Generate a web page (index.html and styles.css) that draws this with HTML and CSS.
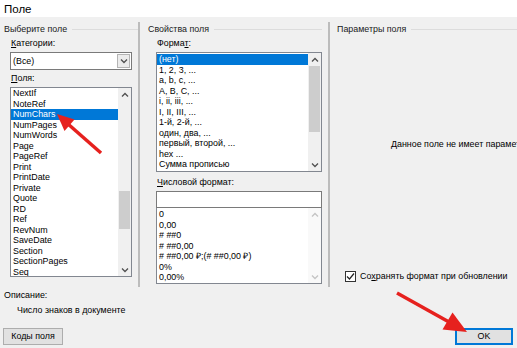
FILE: index.html
```html
<!doctype html>
<html>

<head>
    <meta charset="utf-8">
    <link rel="stylesheet" href="styles.css">
</head>

<body>
    <div class="titlebar">Поле</div>

    <div class="main">
        <div class="col col-left">
            <div class="group">Выберите поле</div>
            <div class="pane">
                <div class="label"><u>К</u>атегории:</div>
                <div class="combo">
                    <span class="combo-text">(Все)</span>
                    <span class="combo-btn"><svg width="8" height="6" viewBox="0 0 8 6"><polyline points="1,1.5 4,4.5 7,1.5" /></svg></span>
                </div>
                <div class="label"><u>П</u>оля:</div>
                <div class="list fields">
                    <div class="items">
                        <div class="item">NextIf</div>
                        <div class="item">NoteRef</div>
                        <div class="item sel">NumChars</div>
                        <div class="item">NumPages</div>
                        <div class="item">NumWords</div>
                        <div class="item">Page</div>
                        <div class="item">PageRef</div>
                        <div class="item">Print</div>
                        <div class="item">PrintDate</div>
                        <div class="item">Private</div>
                        <div class="item">Quote</div>
                        <div class="item">RD</div>
                        <div class="item">Ref</div>
                        <div class="item">RevNum</div>
                        <div class="item">SaveDate</div>
                        <div class="item">Section</div>
                        <div class="item">SectionPages</div>
                        <div class="item">Seq</div>
                    </div>
                    <div class="scroll">
                        <div class="arrow"><svg width="8" height="6" viewBox="0 0 8 6"><polyline points="1,4.5 4,1.5 7,4.5" /></svg></div>
                        <div class="track"><div class="thumb" style="margin-top: 90px; height: 38px"></div></div>
                        <div class="arrow"><svg width="8" height="6" viewBox="0 0 8 6"><polyline points="1,1.5 4,4.5 7,1.5" /></svg></div>
                    </div>
                </div>
            </div>
        </div>

        <div class="sep"></div>

        <div class="col col-mid">
            <div class="group">Свойства поля</div>
            <div class="pane">
                <div class="label">Форма<u>т</u>:</div>
                <div class="list formats">
                    <div class="items">
                        <div class="item sel">(нет)</div>
                        <div class="item">1, 2, 3, ...</div>
                        <div class="item">a, b, c, ...</div>
                        <div class="item">A, B, C, ...</div>
                        <div class="item">i, ii, iii, ...</div>
                        <div class="item">I, II, III, ...</div>
                        <div class="item">1-й, 2-й, ...</div>
                        <div class="item">один, два, ...</div>
                        <div class="item">первый, второй, ...</div>
                        <div class="item">hex ...</div>
                        <div class="item">Сумма прописью</div>
                    </div>
                    <div class="scroll">
                        <div class="arrow"><svg width="8" height="6" viewBox="0 0 8 6"><polyline points="1,4.5 4,1.5 7,4.5" /></svg></div>
                        <div class="track"><div class="thumb" style="margin-top: 0; height: 66px"></div></div>
                        <div class="arrow"><svg width="8" height="6" viewBox="0 0 8 6"><polyline points="1,1.5 4,4.5 7,1.5" /></svg></div>
                    </div>
                </div>
                <div class="label label-num"><u>Ч</u>исловой формат:</div>
                <div class="input"></div>
                <div class="list numbers">
                    <div class="items">
                        <div class="item">0</div>
                        <div class="item">0,00</div>
                        <div class="item"># ##0</div>
                        <div class="item"># ##0,00</div>
                        <div class="item"># ##0,00 ₽;(# ##0,00 ₽)</div>
                        <div class="item">0%</div>
                        <div class="item">0,00%</div>
                    </div>
                    <div class="scroll off">
                        <div class="arrow"><svg width="8" height="6" viewBox="0 0 8 6"><polyline points="1,4.5 4,1.5 7,4.5" /></svg></div>
                        <div class="track"></div>
                        <div class="arrow"><svg width="8" height="6" viewBox="0 0 8 6"><polyline points="1,1.5 4,4.5 7,1.5" /></svg></div>
                    </div>
                </div>
            </div>
        </div>

        <div class="sep"></div>

        <div class="col col-right">
            <div class="group">Параметры поля</div>
            <div class="message">Данное поле не имеет параметров</div>
            <label class="check">
                <span class="box"><svg width="9" height="9" viewBox="0 0 9 9"><polyline points="1,4.5 3.5,7 8,1.5" /></svg></span>
                Со<u>х</u>ранять формат при обновлении
            </label>
        </div>
    </div>

    <div class="desc">
        <div>Описание:</div>
        <div class="desc-text">Число знаков в документе</div>
    </div>

    <div class="buttons">
        <div class="btn">Ко<u>д</u>ы поля</div>
        <div class="btn default">OK</div>
    </div>

    <!-- annotation arrows -->
    <svg class="marks" width="517" height="348" viewBox="0 0 517 348">
        <line x1="101" y1="153" x2="68" y2="124" />
        <polygon points="57,114 74.5,119.5 64.5,131" />
        <line x1="397" y1="293" x2="449" y2="322" />
        <polygon points="467,332 442.5,329.5 452.5,312.5" />
    </svg>
</body>

</html>
```

FILE: styles.css
```css
body {
    margin: 0;
    width: 517px;
    height: 348px;
    overflow: hidden;
    position: relative;
    background: #f0f0f0;
    font-family: "Liberation Sans", Arial, sans-serif;
    font-size: 8.9px;
    color: #000
}

.titlebar {
    height: 17px;
    line-height: 18px;
    padding-left: 4px;
    background: #fff;
    font-size: 11.5px
}

.main {
    display: flex;
    height: 270px
}

.col {
    display: flex;
    flex-direction: column;
    flex: none;
    box-sizing: border-box;
    padding-top: 7px
}

.col-left {
    width: 138px;
    padding-left: 4px
}

.col-mid {
    width: 188px;
    padding-left: 8px;
    padding-right: 6px
}

.col-right {
    width: 280px;
    padding-left: 7px;
    padding-bottom: 5px
}

.sep {
    flex: none;
    width: 2px;
    margin-top: 5px;
    background: #bcbcbc
}

.group {
    display: flex;
    align-items: center;
    line-height: 11px;
    white-space: nowrap;
    color: #1a1a1a
}

.group::after {
    content: "";
    flex: 1;
    height: 1px;
    margin-left: 5px;
    background: #dcdcdc
}

.col-left .pane {
    padding-left: 6px
}

.col-mid .pane {
    padding-left: 8px
}

.label {
    line-height: 11px;
    margin: 3px 0 3px 1px
}

.label-num {
    margin-top: 5px;
    margin-bottom: 3px
}

.combo {
    display: flex;
    align-items: center;
    width: 122px;
    height: 18px;
    box-sizing: border-box;
    border: 1px solid #7a7a7a;
    background: #fff
}

.combo-text {
    flex: 1;
    padding-left: 2px
}

.combo-btn {
    display: flex;
    align-items: center;
    justify-content: center;
    width: 13px;
    height: 14px;
    margin-right: 1px;
    box-sizing: border-box;
    border: 1px solid #b4b4b4;
    background: #ececec
}

svg polyline {
    fill: none;
    stroke: #505050;
    stroke-width: 1.3
}

.list {
    display: flex;
    box-sizing: border-box;
    border: 1px solid #828790;
    background: #fff;
    overflow: hidden
}

.fields {
    width: 122px;
    height: 190px
}

.formats {
    width: 166px;
    height: 120px
}

.numbers {
    width: 166px;
    height: 76px;
    border-top: none
}

.items {
    flex: 1;
    min-width: 0;
    padding-top: 1px;
    overflow: hidden
}

.fields .items {
    padding-top: 0
}

.item {
    line-height: 10.5px;
    padding-left: 2px;
    white-space: nowrap
}

.item.sel {
    background: #0078d7;
    color: #fff
}

.scroll {
    display: flex;
    flex-direction: column;
    flex: none;
    width: 13px;
    background: #f0f0f0
}

.scroll.off {
    background: #f9f9f9
}

.scroll.off polyline {
    stroke: #c4c4c4
}

.arrow {
    display: flex;
    align-items: center;
    justify-content: center;
    height: 13px
}

.track {
    flex: 1
}

.thumb {
    margin: 0 1px;
    background: #cdcdcd
}

.input {
    width: 166px;
    height: 17px;
    box-sizing: border-box;
    border: 1px solid #7a7a7a;
    background: #fff
}

.message {
    margin: 104px 0 0 54px;
    line-height: 11px;
    white-space: nowrap
}

.check {
    display: flex;
    align-items: center;
    margin: auto 0 0 8px;
    line-height: 11px;
    white-space: nowrap
}

.box {
    display: flex;
    align-items: center;
    justify-content: center;
    width: 11px;
    height: 11px;
    margin-right: 4px;
    box-sizing: border-box;
    border: 1px solid #333;
    background: #fff
}

.box polyline {
    stroke: #222;
    stroke-width: 1.2
}

.desc {
    padding: 3px 4px 0;
    line-height: 11px
}

.desc-text {
    margin-top: 4px;
    padding-left: 13px
}

.buttons {
    display: flex;
    justify-content: space-between;
    margin-top: 12px;
    padding: 0 4px 0 3px
}

.btn {
    width: 60px;
    height: 17px;
    line-height: 15px;
    box-sizing: border-box;
    border: 1px solid #adadad;
    background: #e1e1e1;
    text-align: center
}

.btn.default {
    width: 58px;
    border: 2px solid #0078d7;
    line-height: 13px
}

.marks {
    position: absolute;
    top: 0;
    left: 0;
    pointer-events: none
}

.marks line {
    stroke: #e6211e;
    stroke-width: 3.5
}

.marks polygon {
    fill: #e6211e
}
```
